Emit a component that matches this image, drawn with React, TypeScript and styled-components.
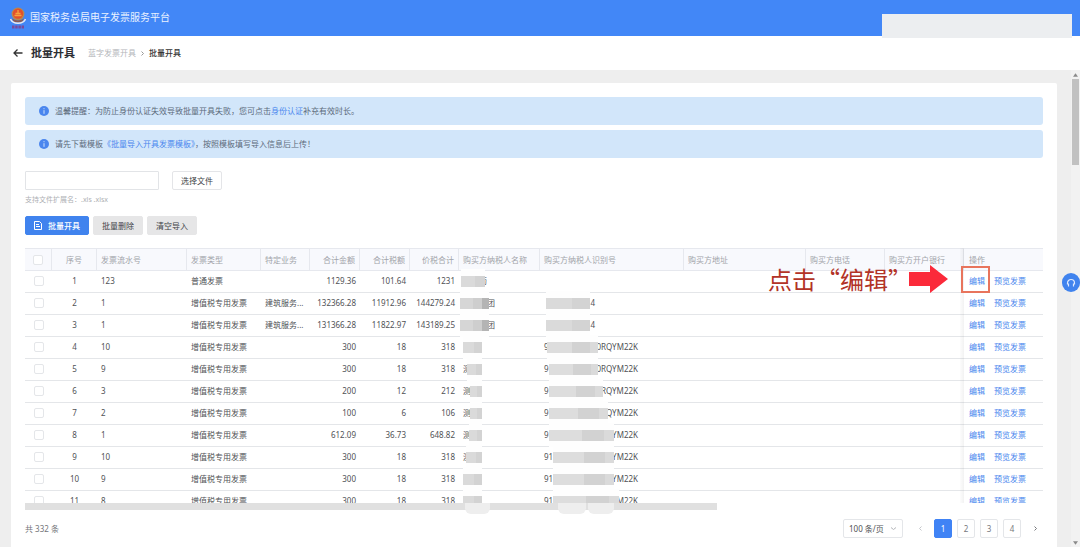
import React from "react";
import styled, { createGlobalStyle, css } from "styled-components";

const Global = createGlobalStyle`
  *, *::before, *::after { box-sizing: border-box; }
  body { margin: 0; background: #eeeeee; }
  body, button, input, select {
    font-family: "Noto Sans", "Noto Sans CJK SC", sans-serif;
    font-size: 8px;
    line-height: 12px;
    color: #505256;
  }
  a { color: #4a86ee; text-decoration: none; }
`;

const Page = styled.div`
  min-height: 100vh;
  display: flex;
  flex-direction: column;
`;

const TopBar = styled.header`
  position: relative;
  height: 36px;
  padding: 0 10px;
  display: flex;
  align-items: center;
  gap: 4px;
  background: #4287f7;
  color: #eaf2ff;
  font-size: 10px;
`;

const AccountCover = styled.div`
  position: absolute;
  top: 14px;
  right: 8px;
  width: 190px;
  height: 24px;
  background: #eceef0;
`;

const Brand = styled.span`
  line-height: 16px;
  padding-bottom: 2px;
`;

const TitleBar = styled.div`
  height: 34px;
  padding: 0 13px;
  display: flex;
  align-items: center;
  background: #fff;
`;

const BackButton = styled.button`
  display: flex;
  padding: 0;
  border: 0;
  background: none;
  margin-right: 8px;
`;

const Title = styled.h1`
  margin: 0 13px 0 0;
  font-size: 11px;
  line-height: 16px;
  font-weight: 700;
  color: #2c2e33;
`;

const Crumbs = styled.nav`
  display: flex;
  align-items: center;
  gap: 3px;
  color: #333;
  font-weight: 500;
  a { color: #b4b6ba; font-weight: 400; }
`;

const Body = styled.div`
  flex: 1;
  display: flex;
  background: #eeeeee;
`;

const Card = styled.main`
  flex: 1;
  min-width: 0;
  margin: 13px 14px 0 11px;
  padding: 14px 14px 10px;
  background: #fff;
  border-radius: 2px 2px 0 0;
`;

const ScrollTrack = styled.div`
  width: 9px;
  padding: 3px 0;
  display: flex;
  flex-direction: column;
  align-items: center;
  justify-content: space-between;
  background: #f2f2f2;
`;

const ScrollTop = styled.div`
  display: flex;
  flex-direction: column;
  align-items: center;
  gap: 2px;
`;

const Thumb = styled.div`
  width: 7px;
  height: 86px;
  background: #c1c1c1;
`;

const Notice = styled.div`
  height: 28px;
  margin-bottom: 5px;
  padding: 0 14px;
  display: flex;
  align-items: center;
  gap: 6px;
  border-radius: 3px;
  background: #d2e6fa;
  color: #5c6a7a;
`;

const Row = styled.div<{ $gap: number; $top: number }>`
  display: flex;
  align-items: center;
  gap: ${(p) => p.$gap}px;
  margin-top: ${(p) => p.$top}px;
`;

const FileBox = styled.input`
  width: 134px;
  height: 19px;
  border: 1px solid #e2e4e7;
  border-radius: 1px;
  background: #fff;
`;

const Button = styled.button<{ $kind?: "primary" | "plain" | "outline" }>`
  height: 19px;
  min-width: 50px;
  padding: 0 8px;
  display: flex;
  align-items: center;
  justify-content: center;
  gap: 6px;
  border: 1px solid #e4e5e8;
  border-radius: 2px;
  background: #fff;
  color: #404246;
  ${(p) =>
    p.$kind === "primary" &&
    css`
      border-color: #4083ee;
      background: #4083ee;
      color: #fff;
      font-weight: 500;
    `}
  ${(p) =>
    p.$kind === "plain" &&
    css`
      border-color: #e6e6e7;
      background: #e6e6e7;
    `}
`;

const Hint = styled.p`
  margin: 5px 0 0;
  line-height: 10px;
  color: #aeb0b4;
  font-size: 7px;
`;

const Stage = styled.div`
  position: relative;
  margin-top: 13px;
`;

const TableView = styled.div`
  height: 255px;
  overflow: hidden;
`;

const Table = styled.table`
  width: 100%;
  table-layout: fixed;
  border-collapse: separate;
  border-spacing: 0;
`;

type Align = "left" | "right" | "center";

const Th = styled.th<{ $align?: Align }>`
  height: 23px;
  padding: 0 4px;
  text-align: ${(p) => p.$align ?? "left"};
  font-weight: 400;
  white-space: nowrap;
  color: #a2a4aa;
  background: #f8f9fd;
  border: solid #e6e8ee;
  border-width: 1px 1px 1px 0;
  &:last-child { border-right: 0; padding-left: 5px; }
`;

const Td = styled.td<{ $align?: Align }>`
  height: 22px;
  padding: 0 4px 1px;
  text-align: ${(p) => p.$align ?? "left"};
  white-space: nowrap;
  border-bottom: 1px solid #e4e6e9;
  &:last-child { padding-left: 5px; }
`;

const Check = styled.input`
  appearance: none;
  display: block;
  width: 10px;
  height: 10px;
  margin: 0 auto;
  border: 1px solid #e4e6e9;
  border-radius: 2px;
  background: #fff;
`;

const Actions = styled.div`
  display: flex;
  gap: 9px;
`;

const Covered = styled.div<{ $width: number }>`
  display: flex;
  width: ${(p) => p.$width}px;
  height: 12px;
`;

const Cover = styled.span<{ $tone: "name" | "code" | "dark"; $before: number; $after: number }>`
  position: relative;
  flex: 1;
  margin: 0 ${(p) => -p.$after}px 0 ${(p) => -p.$before}px;
  &::before {
    content: "";
    position: absolute;
    inset: -6px 0;
    background: #fefefe;
  }
  &::after {
    content: "";
    position: absolute;
    inset: 1px 0 0;
    background: ${(p) =>
      p.$tone === "code"
        ? "linear-gradient(90deg, #dddddd 50%, #d2d2d2 50% 85%, #dadada 85%)"
        : p.$tone === "dark"
          ? "linear-gradient(90deg, #d6d6d6 45%, #cecece 45% 75%, #b4b4b4 75%)"
          : "linear-gradient(90deg, #dadada 60%, #d3d3d3 60%)"};
  }
`;

const PinEdge = styled.div`
  position: absolute;
  top: 0;
  right: 79px;
  width: 4px;
  height: 255px;
  background: linear-gradient(90deg, rgba(0, 0, 0, 0.01), rgba(0, 0, 0, 0.05));
`;

const HBar = styled.div`
  width: 68%;
  height: 7px;
  background: #e0e0e0;
`;

const Smudge = styled.i<{ $left: number; $width: number }>`
  position: absolute;
  bottom: -4px;
  left: ${(p) => p.$left}px;
  width: ${(p) => p.$width}px;
  height: 11px;
  border-radius: 0 0 6px 6px;
  background: #eeeeee;
`;

const Callout = styled.div`
  position: absolute;
  top: 17px;
  right: 53px;
  display: flex;
  align-items: center;
  pointer-events: none;
`;

const CalloutText = styled.span`
  font-family: "Noto Sans CJK SC", sans-serif;
  font-size: 24px;
  line-height: 28px;
  color: #b23327;
  margin-right: -3px;
`;

const CalloutFrame = styled.span`
  width: 29px;
  height: 27px;
  margin-left: 13px;
  border: 2px solid #e8745c;
`;

const Footer = styled.footer`
  margin-top: 9px;
  display: flex;
  align-items: center;
  justify-content: space-between;
  color: #74767a;
`;

const Pager = styled.nav`
  display: flex;
  align-items: center;
  gap: 5px;
  margin-right: -1px;
`;

const SizePicker = styled.label`
  position: relative;
  display: flex;
  margin-right: 3px;
  svg { position: absolute; right: 6px; top: 6px; }
`;

const SizeSelect = styled.select`
  appearance: none;
  width: 60px;
  height: 19px;
  padding: 0 5px;
  border: 1px solid #e4e6e9;
  border-radius: 2px;
  background: #fff;
`;

const PageButton = styled.button<{ $active?: boolean; $bare?: boolean }>`
  width: 18px;
  height: 19px;
  padding: 0;
  display: flex;
  align-items: center;
  justify-content: center;
  border: 1px solid ${(p) => (p.$active ? "#4083f5" : p.$bare ? "transparent" : "#e4e6e9")};
  border-radius: 2px;
  background: ${(p) => (p.$active ? "#4083f5" : "#fff")};
  color: ${(p) => (p.$active ? "#fff" : "#77797d")};
`;

const HelpButton = styled.button`
  position: fixed;
  top: 273px;
  right: 0;
  width: 18px;
  height: 19px;
  padding: 0;
  display: flex;
  align-items: center;
  justify-content: center;
  border: 0;
  border-radius: 9px;
  background: #4083ee;
`;

const Emblem = () => (
  <svg width="16" height="23" viewBox="0 0 16 23" aria-hidden="true">
    <circle cx="8" cy="7" r="6.4" fill="#b9894f" />
    <circle cx="8" cy="6.6" r="5.2" fill="#e2502c" />
    <path d="M4.5 8.5h7M5.5 6.5h5M8 3v4" stroke="#f6a33c" strokeWidth="1.3" />
    <path d="M2 11.5q6 4 12 0l-1.500 3q-4.500 2-9 0z" fill="#8b5b52" />
    <path d="M0.500 12q1.500 4 7.500 4.300q6-.3 7.500-4.300" stroke="#e6e9f2" strokeWidth="1.500" fill="none" />
    <path d="M2 20h12" stroke="#7a4a9c" strokeWidth="3" strokeDasharray="2.500 .7" />
  </svg>
);

const InfoIcon = () => (
  <svg width="10" height="10" viewBox="0 0 10 10" aria-hidden="true">
    <circle cx="5" cy="5" r="5" fill="#4a86ee" />
    <path d="M5 2.200v1M5 4.200v3.600" stroke="#cfe2fb" strokeWidth="1" />
  </svg>
);

const Chevron = ({ d, color }: { d: string; color: string }) => (
  <svg width="7" height="7" viewBox="0 0 7 7" fill="none" stroke={color} aria-hidden="true">
    <path d={d} />
  </svg>
);
const LEFT = "M4.500 1.500l-2 2 2 2";
const RIGHT = "M2.500 1.500l2 2-2 2";
const DOWN = "M1 2.500l2.500 2 2.500-2";

const Caret = ({ d }: { d: string }) => (
  <svg width="5" height="4" viewBox="0 0 6 4" aria-hidden="true">
    <path d={d} fill="#8a8a8a" />
  </svg>
);

/* A masked value: text that stays readable before and after the mask,
   and how far the mask reaches over each of the two. */
type Hidden = {
  width: number;
  tone: "name" | "code" | "dark";
  before?: string;
  after?: string;
  overBefore?: number;
  overAfter?: number;
};

const HiddenValue = ({ width, tone, before, after, overBefore = 0, overAfter = 0 }: Hidden) => (
  <Covered $width={width}>
    {before}
    <Cover $tone={tone} $before={overBefore} $after={overAfter} />
    {after}
  </Covered>
);

const SPECIAL = "增值税专用发票";
const code = (after: string, before = "9"): Hidden => ({ width: 94, tone: "code", before, after, overAfter: 2 });
const name = (before = ""): Hidden => ({ width: 19, tone: "name", before });

type Item = {
  serial: string;
  kind: string;
  business?: string;
  amount: string;
  tax: string;
  total: string;
  buyer: Hidden;
  buyerId?: Hidden;
};

const group: Hidden = { width: 32, tone: "dark", after: "团", overBefore: 3, overAfter: 2 };
const shortId: Hidden = { width: 51, tone: "name", after: "4", overBefore: -2 };

const items: Item[] = [
  { serial: "123", kind: "普通发票", amount: "1129.36", tax: "101.64", total: "1231", buyer: { width: 24, tone: "name", after: "药", overBefore: 2, overAfter: 6 } },
  { serial: "1", kind: SPECIAL, business: "建筑服务...", amount: "132366.28", tax: "11912.96", total: "144279.24", buyer: group, buyerId: shortId },
  { serial: "1", kind: SPECIAL, business: "建筑服务...", amount: "131366.28", tax: "11822.97", total: "143189.25", buyer: group, buyerId: shortId },
  { serial: "10", kind: SPECIAL, amount: "300", tax: "18", total: "318", buyer: name(), buyerId: { ...code("0RQYM22K"), overBefore: 2 } },
  { serial: "9", kind: SPECIAL, amount: "300", tax: "18", total: "318", buyer: { ...name("测"), overBefore: 4 }, buyerId: code("0RQYM22K") },
  { serial: "3", kind: SPECIAL, amount: "200", tax: "12", total: "212", buyer: { ...name("测"), overBefore: 1 }, buyerId: code("RQYM22K") },
  { serial: "2", kind: SPECIAL, amount: "100", tax: "6", total: "106", buyer: { ...name("测"), overBefore: 1 }, buyerId: code("QYM22K") },
  { serial: "1", kind: SPECIAL, amount: "612.09", tax: "36.73", total: "648.82", buyer: { ...name("测"), overBefore: 2 }, buyerId: code("YM22K") },
  { serial: "10", kind: SPECIAL, amount: "300", tax: "18", total: "318", buyer: { ...name("测"), overBefore: 5 }, buyerId: code("YM22K", "91") },
  { serial: "9", kind: SPECIAL, amount: "300", tax: "18", total: "318", buyer: name(), buyerId: code("YM22K", "91") },
  { serial: "8", kind: SPECIAL, amount: "300", tax: "18", total: "318", buyer: name(), buyerId: code("M22K", "91") },
];

const columns: { label: string; width?: number; align?: Align }[] = [
  { label: "序号", width: 45, align: "center" },
  { label: "发票流水号", width: 90 },
  { label: "发票类型", width: 74 },
  { label: "特定业务", width: 49 },
  { label: "合计金额", width: 50, align: "right" },
  { label: "合计税额", width: 50, align: "right" },
  { label: "价税合计", width: 49, align: "right" },
  { label: "购买方纳税人名称", width: 81 },
  { label: "购买方纳税人识别号", width: 144 },
  { label: "购买方地址" },
  { label: "购买方电话", width: 79 },
  { label: "购买方开户银行", width: 79 },
  { label: "操作", width: 79 },
];

export default function App() {
  return (
    <>
      <Global />
      <Page>
        <TopBar>
          <Emblem />
          <Brand>国家税务总局电子发票服务平台</Brand>
          <AccountCover />
        </TopBar>
        <TitleBar>
          <BackButton aria-label="返回">
            <svg width="10" height="10" viewBox="0 0 10 10" fill="none" stroke="#333" strokeWidth="1.3">
              <path d="M9.500 5H1M4.500 1.500L1 5l3.500 3.500" />
            </svg>
          </BackButton>
          <Title>批量开具</Title>
          <Crumbs>
            <a href="#blue">蓝字发票开具</a>
            <Chevron d={RIGHT} color="#999" />
            <span>批量开具</span>
          </Crumbs>
        </TitleBar>
        <Body>
          <Card>
            <Notice>
              <InfoIcon />
              <span>
                温馨提醒：为防止身份认证失效导致批量开具失败，您可点击<a href="#auth">身份认证</a>补充有效时长。
              </span>
            </Notice>
            <Notice>
              <InfoIcon />
              <span>
                请先下载模板<a href="#template">《批量导入开具发票模板》</a>，按照模板填写导入信息后上传！
              </span>
            </Notice>
            <Row $gap={13} $top={13}>
              <FileBox type="text" aria-label="文件" />
              <Button $kind="outline">选择文件</Button>
            </Row>
            <Hint>支持文件扩展名：.xls .xlsx</Hint>
            <Row $gap={4} $top={11}>
              <Button $kind="primary">
                <svg width="8" height="9" viewBox="0 0 8 9" fill="none" stroke="#fff" aria-hidden="true">
                  <path d="M.5.5h5l2 2v6h-7zM2 3.500h3M2 5.500h4" />
                </svg>
                批量开具
              </Button>
              <Button $kind="plain">批量删除</Button>
              <Button $kind="plain">清空导入</Button>
            </Row>
            <Stage>
              <TableView>
                <Table>
                  <colgroup>
                    <col width={27} />
                    {columns.map((c) => (
                      <col key={c.label} width={c.width} />
                    ))}
                  </colgroup>
                  <thead>
                    <tr>
                      <Th>
                        <Check type="checkbox" aria-label="全选" />
                      </Th>
                      {columns.map((c) => (
                        <Th key={c.label} $align={c.align}>
                          {c.label}
                        </Th>
                      ))}
                    </tr>
                  </thead>
                  <tbody>
                    {items.map((it, i) => (
                      <tr key={i}>
                        <Td>
                          <Check type="checkbox" aria-label={`选择第 ${i + 1} 行`} />
                        </Td>
                        <Td $align="center">{i + 1}</Td>
                        <Td>{it.serial}</Td>
                        <Td>{it.kind}</Td>
                        <Td>{it.business}</Td>
                        <Td $align="right">{it.amount}</Td>
                        <Td $align="right">{it.tax}</Td>
                        <Td $align="right">{it.total}</Td>
                        <Td>
                          <HiddenValue {...it.buyer} />
                        </Td>
                        <Td>{it.buyerId && <HiddenValue {...it.buyerId} />}</Td>
                        <Td />
                        <Td />
                        <Td />
                        <Td>
                          <Actions>
                            <a href="#edit">编辑</a>
                            <a href="#preview">预览发票</a>
                          </Actions>
                        </Td>
                      </tr>
                    ))}
                  </tbody>
                </Table>
              </TableView>
              <HBar />
              <Smudge $left={440} $width={25} />
              <Smudge $left={533} $width={28} />
              <Smudge $left={563} $width={26} />
              <PinEdge />
              <Callout>
                <CalloutText>点击“编辑”</CalloutText>
                <svg width="39" height="28" viewBox="0 0 39 28" aria-hidden="true">
                  <path d="M0 7h21V0l18 14-18 14v-7H0z" fill="#fb2a3a" />
                </svg>
                <CalloutFrame />
              </Callout>
            </Stage>
            <Footer>
              <span>共 332 条</span>
              <Pager aria-label="分页">
                <SizePicker>
                  <SizeSelect aria-label="每页条数">
                    <option>100 条/页</option>
                  </SizeSelect>
                  <Chevron d={DOWN} color="#b4b6ba" />
                </SizePicker>
                <PageButton $bare aria-label="上一页">
                  <Chevron d={LEFT} color="#c4c6ca" />
                </PageButton>
                <PageButton $active>1</PageButton>
                <PageButton>2</PageButton>
                <PageButton>3</PageButton>
                <PageButton>4</PageButton>
                <PageButton $bare aria-label="下一页">
                  <Chevron d={RIGHT} color="#77797d" />
                </PageButton>
              </Pager>
            </Footer>
          </Card>
          <ScrollTrack>
            <ScrollTop>
              <Caret d="M3 0l3 4H0z" />
              <Thumb />
            </ScrollTop>
            <Caret d="M3 4L0 0h6z" />
          </ScrollTrack>
        </Body>
        <HelpButton aria-label="客服">
          <svg width="10" height="10" viewBox="0 0 10 10" fill="none" stroke="#dfeaff" aria-hidden="true">
            <path d="M1.500 6.500V5a3.500 3.500 0 0 1 7 0v1.500M2.500 5.500v3M7.500 5.500v3" strokeWidth="1.200" />
          </svg>
        </HelpButton>
      </Page>
    </>
  );
}
